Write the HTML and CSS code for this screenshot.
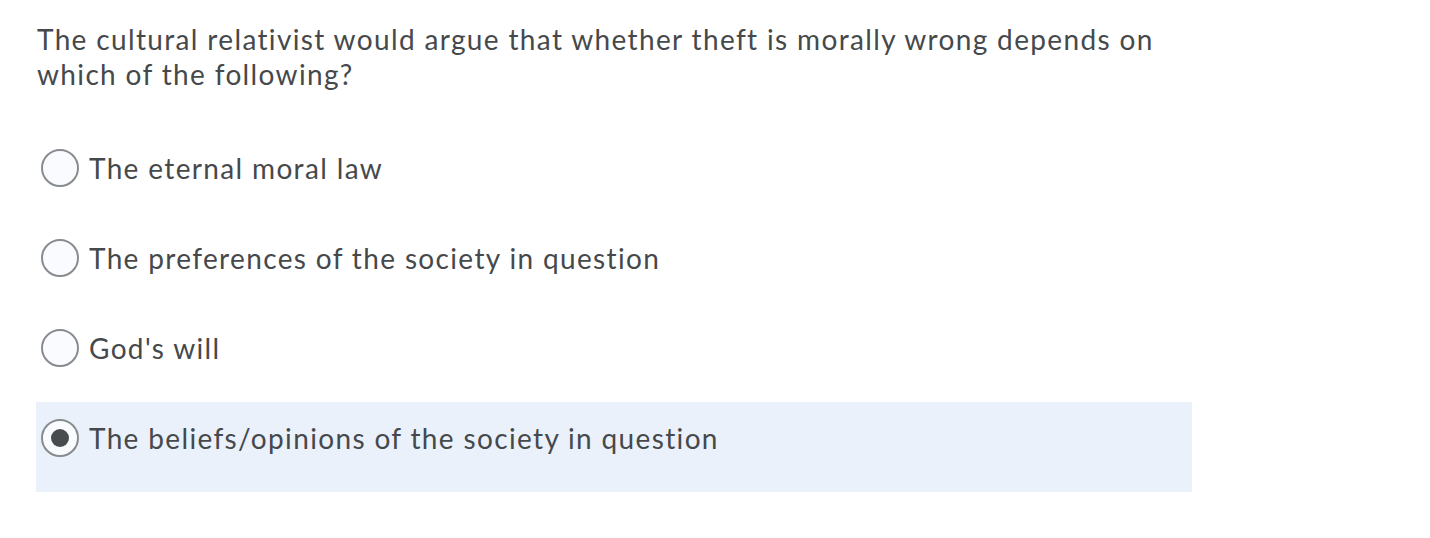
FILE: index.html
```html
<!DOCTYPE html>
<html>
<head>
<meta charset="utf-8">
<link rel="stylesheet" href="styles.css">
</head>
<body>
<div class="quiz">
  <p class="question">The cultural relativist would argue that whether theft is morally wrong depends on which of the following?</p>
  <div class="options">
    <label class="option"><span class="radio"></span><span class="label">The eternal moral law</span></label>
    <label class="option"><span class="radio"></span><span class="label">The preferences of the society in question</span></label>
    <label class="option"><span class="radio"></span><span class="label">God's will</span></label>
    <label class="option selected"><span class="radio"></span><span class="label">The beliefs/opinions of the society in question</span></label>
  </div>
</div>
</body>
</html>
```
FILE: styles.css
```css
html, body {
  margin: 0;
  padding: 0;
  background: #ffffff;
}
body {
  font-family: Lato, "Open Sans", sans-serif;
  color: #46494b;
}
.quiz {
  width: 1156px;
  padding: 22px 0 0 36px;
}
.question {
  margin: 0 0 0 1px;
  font-size: 28px;
  line-height: 35px;
  letter-spacing: 1.35px;
  width: 1140px;
}
.options {
  margin-top: 40px;
  display: flex;
  flex-direction: column;
}
.option {
  display: flex;
  align-items: center;
  height: 90px;
  box-sizing: border-box;
  padding: 0 0 18px 5px;
  gap: 10px;
}
.option.selected {
  background: #eaf1fb;
}
.radio {
  width: 38px;
  height: 38px;
  box-sizing: border-box;
  border: 2px solid #888c8f;
  border-radius: 50%;
  background: #f9fbff;
  display: flex;
  align-items: center;
  justify-content: center;
  flex: none;
}
.selected .radio::after {
  content: "";
  width: 18px;
  height: 18px;
  border-radius: 50%;
  background: #494c4e;
}
.label {
  font-size: 28px;
  line-height: 35px;
  letter-spacing: 1.35px;
}
```
